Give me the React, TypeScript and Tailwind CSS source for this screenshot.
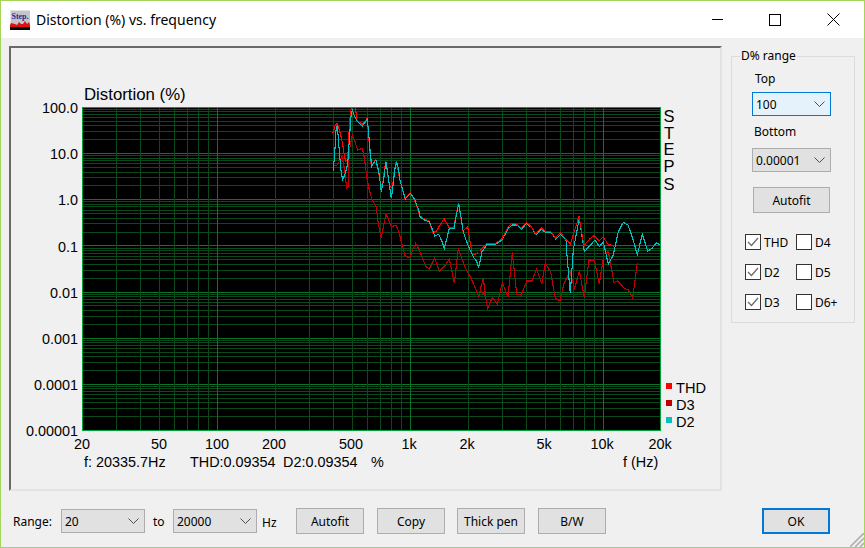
import React from "react";

const UI = { fontFamily: '"Noto Sans", Tahoma, sans-serif' };
const ARIAL = '"Liberation Sans", Arial, sans-serif';

// plot geometry in page coordinates
const L = 82, R = 661, T = 107, B = 430;
const DX = 193, DY = 46.14;
const fx = (f: number) => L + (Math.log10(f) - Math.log10(20)) * DX;
const fy = (d: number) => T + (2 - Math.log10(d)) * DY;

const z2 = (a: number[][]) => a.map(([x, y]) => [320 + x / 3, 100 + y / 3]);
const z3 = (a: number[][]) => a.map(([x, y]) => [480 + x / 3, 190 + y / 3]);
const pts = (a: number[][]) => a.map(([x, y]) => `${x.toFixed(1)},${y.toFixed(1)}`).join(" ");
const lift = (a: number[][], d: number) => a.map(([x, y]) => [x - 0.3, y - d]);

const D2 = [
  ...z2([[40,212],[44,160],[48,90],[52,75],[58,155],[64,220],[68,238],[74,225],[80,205],[84,180],[88,120],[93,50],[97,30],[102,45],[110,62],[118,70],[127,78],[134,68],[142,58],[146,100],[150,150],[155,200],[160,190],[168,180],[174,205],[178,225],[184,275],[190,245],[198,185],[204,225],[208,255],[214,295],[218,265],[224,210],[230,185],[236,210],[240,240],[248,270],[256,297],[264,288],[272,280],[284,298],[290,315],[296,330],[300,350],[310,358],[318,362],[328,365],[340,395],[344,408],[356,403],[366,425],[373,445],[382,410],[388,385],[402,385],[410,340],[416,312],[422,345],[430,395],[438,420],[450,450],[460,470],[470,485],[476,502]]),
  ...z3([[0,215],[6,185],[22,163],[47,163],[66,150],[85,115],[97,105],[110,105],[125,117],[140,100],[155,113],[168,135],[184,118],[198,128],[213,127],[227,147],[242,133],[258,150],[262,210],[271,310],[280,180],[298,85],[313,185],[345,150],[358,170],[370,155],[385,222],[400,195],[415,125],[430,97],[444,105],[458,145],[472,195],[487,133],[503,183],[516,175],[530,158],[540,165]]),
];

const THD_A = lift(z2([[40,100],[46,80],[52,72],[60,95],[68,130],[74,170],[78,185],[84,180],[88,100],[92,40],[96,22],[107,25],[112,62],[127,75],[142,58],[146,100],[150,150],[155,200],[168,180],[178,225],[184,265],[190,245],[198,185],[204,225],[210,262],[218,265],[224,210],[230,185],[240,240],[256,297],[272,280],[290,315],[300,350],[328,365],[340,400],[350,395],[362,375],[373,358],[382,372],[388,385],[402,385],[410,340],[416,312],[430,395],[444,382],[450,420],[458,468],[476,460]]), 0.6);
const THD_B = lift(z3([[0,185],[22,163],[47,163],[66,150],[85,115],[97,103],[110,105],[125,117],[140,100],[155,113],[168,135],[184,116],[198,128],[213,127],[227,147],[242,131],[258,150],[272,165],[298,82],[313,170],[330,150],[343,140],[358,155],[370,145],[385,165],[403,172]]), 1);

const D3 = [
  ...z2([[40,195],[50,197],[58,185],[66,170],[72,200],[80,265],[84,260],[88,150],[97,105],[105,125],[113,150],[127,145],[134,180],[140,230],[148,270],[155,295],[168,320],[175,370],[184,415],[190,380],[198,343],[206,360],[214,380],[228,376],[236,395],[248,440],[256,470],[270,472],[278,450],[287,430],[298,450],[310,480],[318,500],[328,507],[344,475],[358,513],[374,497],[388,478],[396,515],[403,550],[415,445],[424,470],[434,500],[446,522],[458,545],[476,590],[490,533],[497,590]]),
  ...z3([[0,300],[10,265],[16,320],[23,355],[37,322],[52,343],[67,278],[84,322],[97,187],[110,312],[124,315],[140,273],[155,273],[170,238],[185,283],[196,218],[212,247],[226,325],[240,332],[252,280],[270,245],[284,295],[298,243],[313,322],[327,210],[343,210],[358,282],[372,190],[385,185],[402,277],[413,273],[433,295],[445,300],[458,325],[472,218]]),
];

const freqs: number[] = [];
for (const m of [10, 100, 1000, 10000]) for (let i = 1; i <= 9; i++) {
  const f = i * m;
  if (f > 20 && f < 20000) freqs.push(f);
}
const amps: number[] = [];
for (const m of [0.00001, 0.0001, 0.001, 0.01, 0.1, 1, 10]) for (let i = 1; i <= 9; i++) {
  const a = i * m;
  if (i > 1 || m > 0.00001) amps.push(a);
}
const isMajorF = (f: number) => f === 100 || f === 1000 || f === 10000;
const isMajorA = (a: number) => Math.abs(Math.log10(a) - Math.round(Math.log10(a))) < 1e-6;

const yLabels: [string, number][] = [["100.0", 113], ["10.0", 159], ["1.0", 205], ["0.1", 252], ["0.01", 298], ["0.001", 344], ["0.0001", 390], ["0.00001", 436]];
const xLabels: [string, number][] = [["20", 82], ["50", 159], ["100", 217], ["200", 274], ["500", 351], ["1k", 409], ["2k", 467], ["5k", 544], ["10k", 602], ["20k", 660]];
const steps: [string, number][] = [["S", 122], ["T", 138.5], ["E", 155], ["P", 172], ["S", 190]];

function Chart() {
  return (
    <svg width={709} height={441} viewBox="11 48 709 441" className="block" fontFamily={ARIAL} fill="#000">
      <defs>
        <clipPath id="plot">
          <rect x={L} y={T + 1} width={R - L} height={B - T} />
        </clipPath>
      </defs>
      <rect x={L} y={T} width={R - L} height={B - T} fill="#000" />
      {amps.map((a) => {
        const y = Math.round(fy(a)) + 0.5;
        return <line key={a} x1={L} x2={R} y1={y} y2={y} stroke={isMajorA(a) ? "#0c7428" : "#0a4a1a"} />;
      })}
      {freqs.map((f) => {
        const x = Math.round(fx(f)) + 0.5;
        return <line key={f} x1={x} x2={x} y1={T} y2={B} stroke={isMajorF(f) ? "#0c7428" : "#0a4a1a"} />;
      })}
      <rect x={L + 0.5} y={T + 0.5} width={R - L - 1} height={B - T} fill="none" stroke="#00a13a" />
      <g fill="none" strokeWidth={1.1} shapeRendering="crispEdges" clipPath="url(#plot)">
        <polyline points={pts(THD_A)} stroke="#ff0000" />
        <polyline points={pts(D3)} stroke="#c00000" />
        <polyline points={pts(D2)} stroke="#00c0c0" />
        <polyline points={pts(THD_B)} stroke="#ff0000" strokeWidth={1} />
      </g>

      <text x={84} y={100} fontSize={16.8}>Distortion (%)</text>
      {yLabels.map(([t, y]) => (
        <text key={t} x={78} y={y} fontSize={14.4} textAnchor="end">{t}</text>
      ))}
      {xLabels.map(([t, x]) => (
        <text key={t} x={x} y={449} fontSize={14.4} textAnchor="middle">{t}</text>
      ))}
      {steps.map(([c, y], i) => (
        <text key={i} x={669} y={y} fontSize={16.5} textAnchor="middle">{c}</text>
      ))}
      <text x={84} y={467} fontSize={14.4}>f: 20335.7Hz</text>
      <text x={190} y={467} fontSize={14.4}>THD:0.09354</text>
      <text x={283} y={467} fontSize={14.4}>D2:0.09354</text>
      <text x={371} y={467} fontSize={14.4}>%</text>
      <text x={623} y={467} fontSize={14.4}>f (Hz)</text>

      <rect x={666} y={383} width={6} height={6} fill="#ff0000" />
      <text x={676} y={393} fontSize={14.6}>THD</text>
      <rect x={666} y={400} width={6} height={6} fill="#c00000" />
      <text x={676} y={410} fontSize={14.6}>D3</text>
      <rect x={666} y={417} width={6} height={6} fill="#00c0c0" />
      <text x={676} y={427} fontSize={14.6}>D2</text>
    </svg>
  );
}

function Chevron() {
  return (
    <svg width={11} height={6} viewBox="0 0 11 6" fill="none" stroke="#4d4d4d" strokeWidth={1}>
      <path d="M0.5 0.5 L5.5 5.5 L10.5 0.5" />
    </svg>
  );
}

function Select({ value, className }: { value: string; className: string }) {
  return (
    <div className={`flex items-center justify-between pl-[3px] pr-[5px] text-[12px] text-black border ${className}`}>
      <span className="pt-px">{value}</span>
      <Chevron />
    </div>
  );
}

function Button({ label, className = "" }: { label: string; className?: string }) {
  return (
    <div className={`flex items-center justify-center w-[68px] h-[26px] pt-px bg-[#e1e1e1] border border-[#adadad] text-[12px] text-black ${className}`}>
      {label}
    </div>
  );
}

function Check({ label, checked }: { label: string; checked?: boolean }) {
  return (
    <div className="flex items-center gap-[3px] h-4 text-[12px] text-black leading-4">
      <div className="flex items-center justify-center w-4 h-4 bg-white border border-[#333333]">
        {checked && (
          <svg width={12} height={10} viewBox="0 0 12 10" fill="none" stroke="#6b6b6b" strokeWidth={1.3}>
            <path d="M1 5 L4.5 8.5 L11 1" />
          </svg>
        )}
      </div>
      <span className="pt-px">{label}</span>
    </div>
  );
}

function AppIcon() {
  return (
    <svg width={20} height={20} viewBox="0 0 20 20" fontFamily='"Liberation Serif", serif'>
      <rect width={20} height={20} fill="#c4c4cc" />
      <path d="M0 0 H20 V1 H1 V20 H0 Z" fill="#e4e4e8" />
      <rect y={15} width={20} height={5} fill="#000" />
      <path d="M0 15 L1 13 L5 14 L7 15 L9 12 L11 14 L13 14 L15 11 L17 14 L19 12 L20 15 L20 17 L0 17 Z" fill="#e01010" />
      <text x={10} y={9} fontSize={8} fontWeight={700} fill="#2a2a90" textAnchor="middle">Step.</text>
    </svg>
  );
}

export default function App() {
  return (
    <div className="relative w-[865px] h-[548px] flex flex-col bg-[#f0f0f0] border border-[#a4d55b] overflow-hidden" style={UI}>
      {/* title bar */}
      <div className="h-[37px] shrink-0 bg-white flex items-center pl-[9px]">
        <AppIcon />
        <span className="ml-[6px] text-[14px] text-black">Distortion (%) vs. frequency</span>
        <div className="ml-auto flex items-center">
          <div className="w-[62px] flex justify-center">
            <div className="w-[11px] h-px bg-black" />
          </div>
          <div className="w-[54px] flex justify-center">
            <div className="w-3 h-3 border border-black" />
          </div>
          <div className="w-[62px] flex justify-center">
            <svg width={13} height={13} viewBox="0 0 13 13" stroke="#000" fill="none">
              <path d="M0.5 0.5 L12.5 12.5 M12.5 0.5 L0.5 12.5" />
            </svg>
          </div>
        </div>
      </div>

      {/* main row */}
      <div className="flex pl-2 pt-[8px] gap-[9px]">
        <div className="w-[713px] h-[445px] border-2 border-t-[#696969] border-l-[#696969] border-r-[#e3e3e3] border-b-[#e3e3e3]">
          <Chart />
        </div>

        <div className="relative mt-[10px] w-[124px] h-[267px] border border-[#dcdcdc] flex flex-col">
          <span className="absolute left-[8px] -top-[9px] bg-[#f0f0f0] px-px text-[12px] text-black leading-4">D% range</span>
          <span className="ml-[23px] mt-[14px] text-[12px] text-black leading-4">Top</span>
          <Select value="100" className="ml-[20px] mt-[5px] w-[79px] h-[24px] bg-[#e5f1fb] border-[#0078d7]" />
          <span className="ml-[22px] mt-[8px] text-[12px] text-black leading-4">Bottom</span>
          <Select value="0.00001" className="ml-[20px] mt-[8px] w-[79px] h-[24px] bg-[#e1e1e1] border-[#adadad]" />
          <Button label="Autofit" className="ml-[21px] mt-[15px] !w-[77px]" />
          <div className="ml-[13px] mt-[21px] grid grid-cols-[51px_auto] gap-y-[14px]">
            <Check label="THD" checked />
            <Check label="D4" />
            <Check label="D2" checked />
            <Check label="D5" />
            <Check label="D3" checked />
            <Check label="D6+" />
          </div>
        </div>
      </div>

      {/* bottom row */}
      <div className="flex items-center pl-3 mt-[17px] h-[26px] text-[12px] text-black">
        <span className="w-[48px] pt-px">Range:</span>
        <Select value="20" className="w-[84px] h-[24px] bg-[#e1e1e1] border-[#adadad]" />
        <span className="ml-2 w-[20px] pt-px">to</span>
        <Select value="20000" className="w-[84px] h-[24px] bg-[#e1e1e1] border-[#adadad]" />
        <span className="ml-[5px] w-[34px] mt-[4px]">Hz</span>
        <Button label="Autofit" />
        <Button label="Copy" className="ml-[13px]" />
        <Button label="Thick pen" className="ml-3" />
        <Button label="B/W" className="ml-[13px]" />
        <Button label="OK" className="ml-[156px] border-2 !border-[#0078d7]" />
      </div>

      <svg width={14} height={14} viewBox="0 0 14 14" className="absolute right-0 bottom-0" stroke="#b0b0b0" strokeWidth={1.6}>
        <path d="M0 14 L14 0 M5 14 L14 5 M10 14 L14 10" />
      </svg>
    </div>
  );
}
